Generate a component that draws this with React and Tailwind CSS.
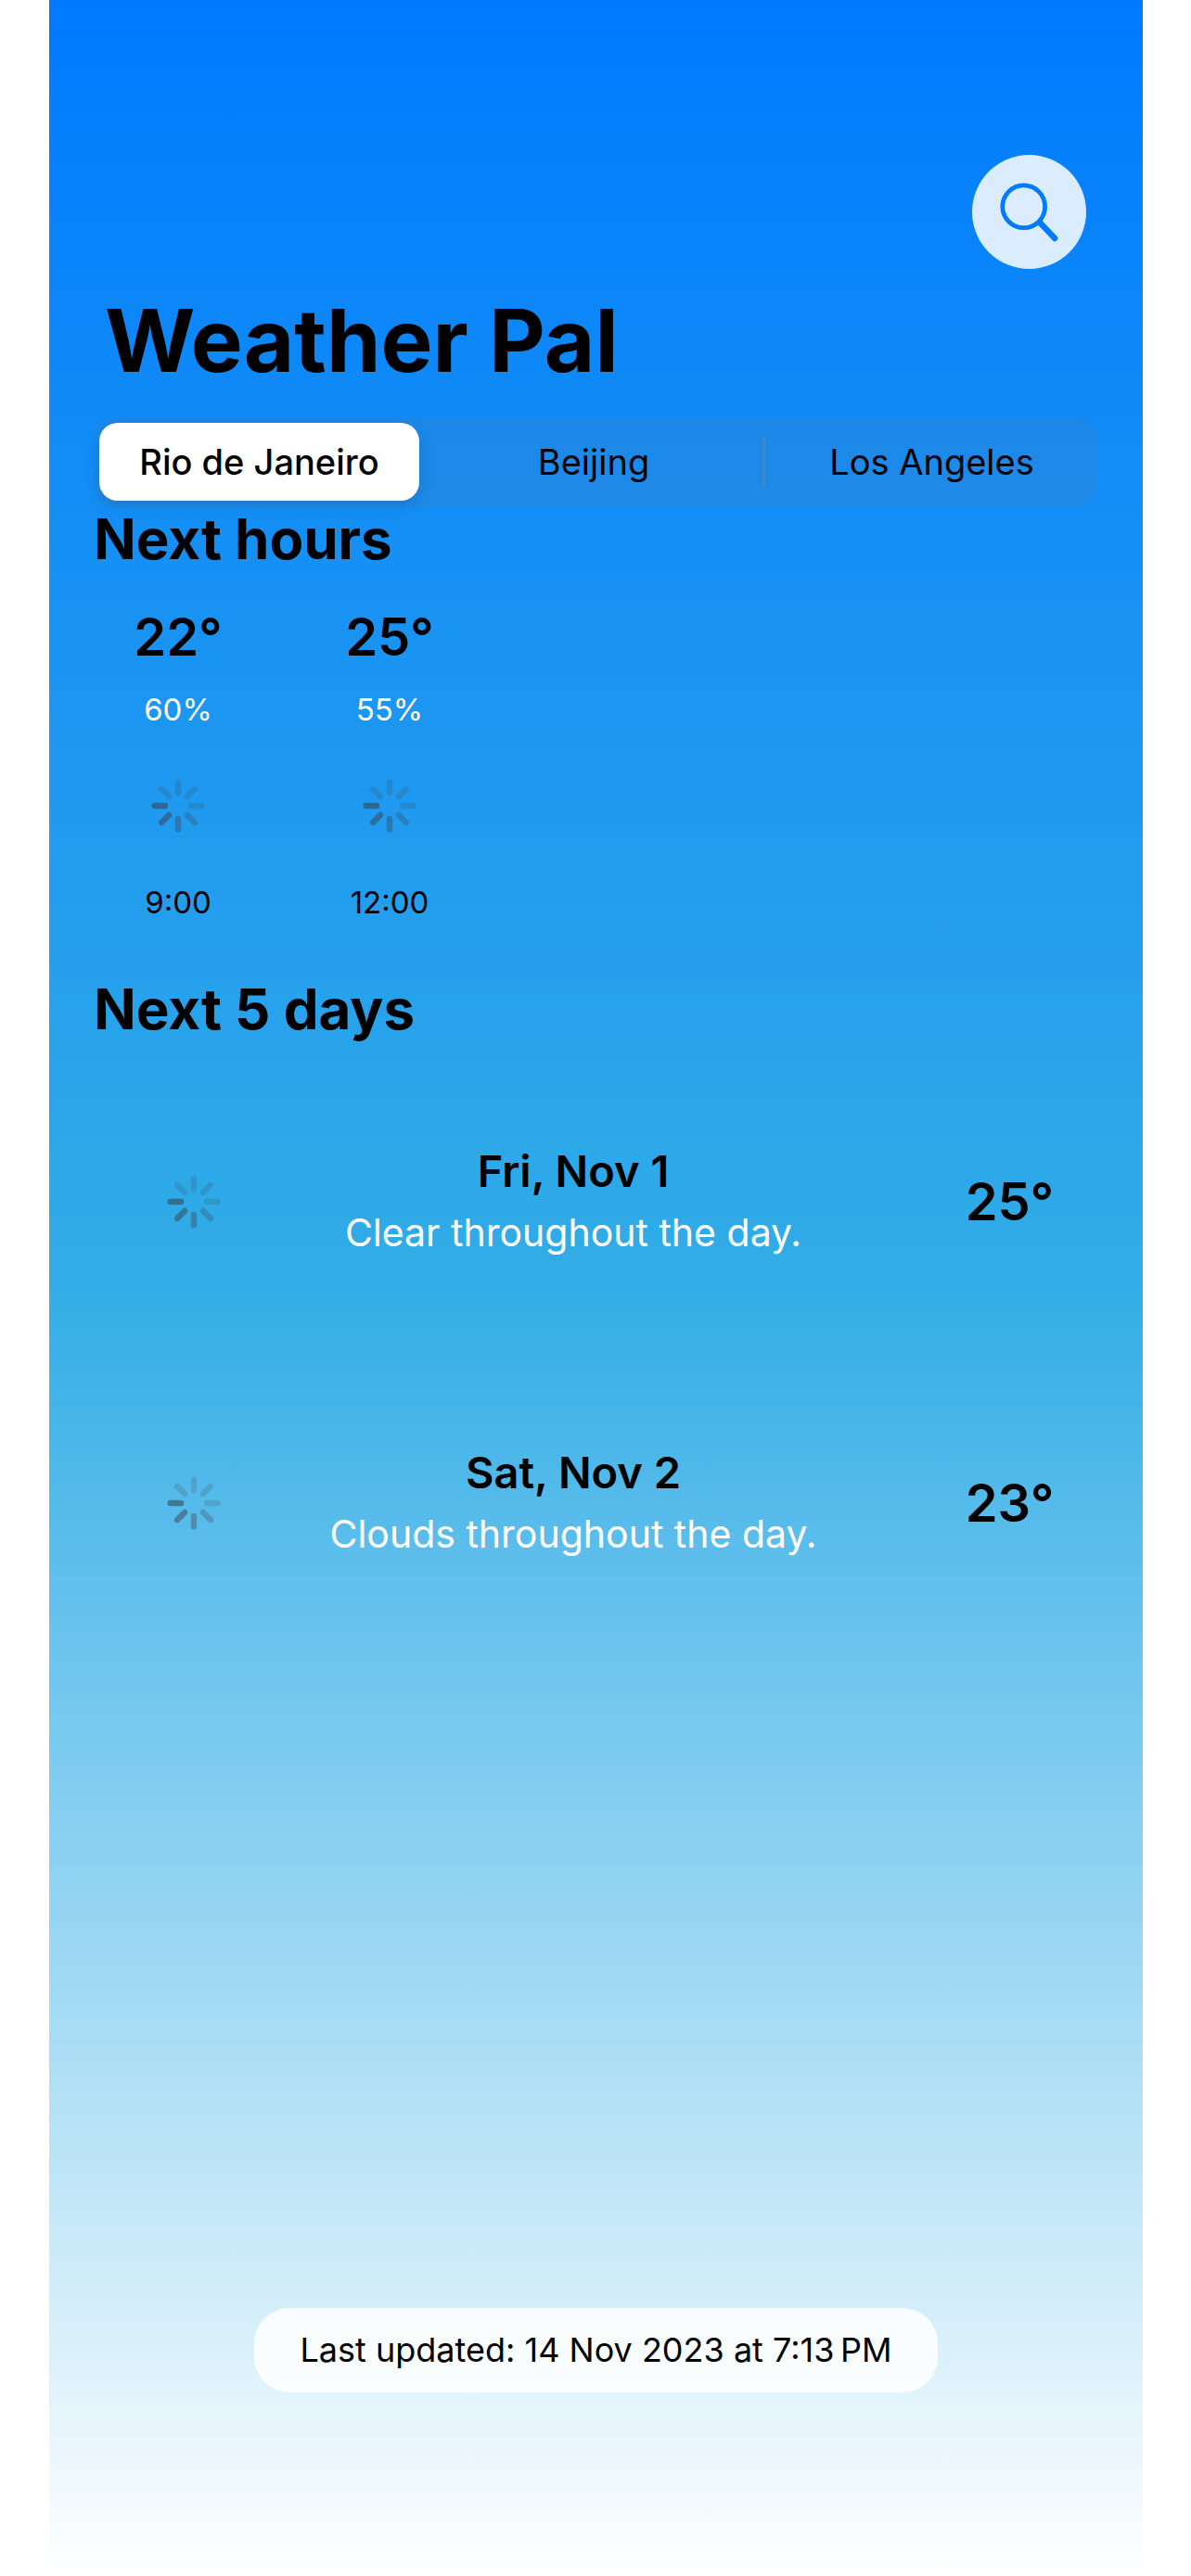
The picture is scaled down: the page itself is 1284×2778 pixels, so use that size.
const cities = ["Rio de Janeiro", "Beijing", "Los Angeles"];

const hours = [
  { temp: "22°", humidity: "60%", time: "9:00" },
  { temp: "25°", humidity: "55%", time: "12:00" },
];

const days = [
  { date: "Fri, Nov 1", summary: "Clear throughout the day.", temp: "25°" },
  { date: "Sat, Nov 2", summary: "Clouds throughout the day.", temp: "23°" },
];

// Spoke opacities, clockwise from the top.
const spokes = [0.18, 0.18, 0.18, 0.28, 0.36, 0.48, 0.54, 0.18];

function Spinner() {
  return (
    <svg className="size-[58px]" viewBox="-29 -29 58 58" role="img" aria-label="Loading">
      {spokes.map((opacity, i) => (
        <line
          key={i}
          x1="0"
          y1="-25.3"
          x2="0"
          y2="-14"
          stroke="#3c3c43"
          strokeWidth="6.4"
          strokeLinecap="round"
          strokeOpacity={opacity}
          transform={`rotate(${i * 45})`}
        />
      ))}
    </svg>
  );
}

function SearchButton() {
  return (
    <button
      type="button"
      aria-label="Search"
      className="flex size-[123px] items-center justify-center rounded-full bg-white/85"
    >
      <svg className="size-[66px]" viewBox="-33 -33 66 66" fill="none" stroke="#007aff">
        <circle cx="-6.3" cy="-6.2" r="22.9" strokeWidth="4.8" />
        <path d="M11.5 11.5 L27.2 28" strokeWidth="6.4" strokeLinecap="round" />
      </svg>
    </button>
  );
}

function CityTabs() {
  return (
    <div role="tablist" className="mt-[23px] ml-[48px] mr-[48px] flex h-24 rounded-[24px] bg-[#767680]/12 pl-[6px]">
      <button
        type="button"
        role="tab"
        aria-selected="true"
        className="my-[6px] mr-[6px] flex-[345] rounded-[20px] bg-white text-[38px] font-medium shadow-[0_6px_16px_rgba(0,0,0,0.12)]"
      >
        {cities[0]}
      </button>
      <button type="button" role="tab" aria-selected="false" className="flex-[364] text-[38px]">
        {cities[1]}
      </button>
      <div className="my-[21px] w-[3px] rounded-full bg-[#8e8e93]/30" />
      <button type="button" role="tab" aria-selected="false" className="flex-[359] text-[38px]">
        {cities[2]}
      </button>
    </div>
  );
}

export default function App() {
  return (
    <div className="min-h-screen bg-white font-['Inter',sans-serif] text-black">
      <main className="ml-[53px] mr-[52px] flex min-h-screen flex-col bg-[linear-gradient(to_bottom,#007aff,#32ade6_50%,#ffffff)] pt-[167px] pb-[198px]">
        <header>
          <div className="flex justify-end pr-[61px]">
            <SearchButton />
          </div>
          <h1 className="mt-[17px] pl-[60px] text-[94px] leading-[120px] font-bold">Weather Pal</h1>
        </header>

        <CityTabs />

        <section>
          <h2 className="pl-[48px] text-[60px] leading-[70px] font-bold">Next hours</h2>
          <div className="mt-[36px] flex pl-[25px]">
            {hours.map((h) => (
              <div key={h.time} className="flex w-[228px] flex-col items-center">
                <div className="text-[56px] leading-[70px] font-semibold">{h.temp}</div>
                <div className="mt-[23px] mb-[55px] text-[33px] leading-[40px] text-white">{h.humidity}</div>
                <Spinner />
                <div className="mt-[55px] text-[33px] leading-[40px]">{h.time}</div>
              </div>
            ))}
          </div>
        </section>

        <section className="mt-[60px]">
          <h2 className="pl-[48px] text-[60px] leading-[70px] font-bold">Next 5 days</h2>
          <ul className="mt-[11px] flex flex-col gap-px">
            {days.map((d) => (
              <li
                key={d.date}
                className="grid grid-cols-[100px_1fr_223px] items-center justify-items-center py-24 pl-[106px] pr-8"
              >
                <Spinner />
                <div className="text-center">
                  <div className="text-[47px] leading-[66px] font-semibold">{d.date}</div>
                  <div className="text-[41px] leading-[66px] text-white">{d.summary}</div>
                </div>
                <div className="text-[56px] leading-[70px] font-semibold">{d.temp}</div>
              </li>
            ))}
          </ul>
        </section>

        <footer className="mt-auto self-center rounded-[38px] bg-white/85 px-[50px] text-[36px] leading-[91px]">
          Last updated: 14 Nov 2023 at 7:13&#8239;PM
        </footer>
      </main>
    </div>
  );
}
